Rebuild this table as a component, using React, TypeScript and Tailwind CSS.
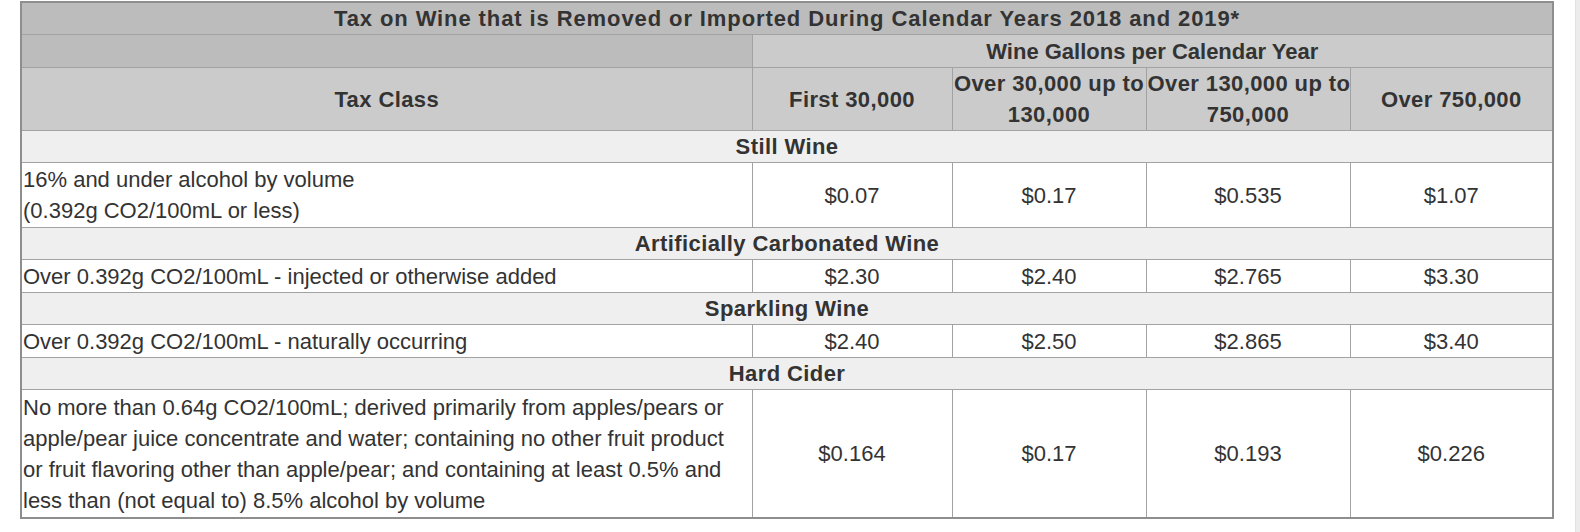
import { Fragment } from 'react';

const font = { fontFamily: '"Liberation Sans", Arial, sans-serif' };

const rates = [
  {
    group: 'Still Wine',
    pad: 'py-px',
    label: (
      <>
        16% and under alcohol by volume
        <br />
        (0.392g CO2/100mL or less)
      </>
    ),
    values: ['$0.07', '$0.17', '$0.535', '$1.07'],
  },
  {
    group: 'Artificially Carbonated Wine',
    pad: 'pt-px',
    label: <>Over 0.392g CO2/100mL - injected or otherwise added</>,
    values: ['$2.30', '$2.40', '$2.765', '$3.30'],
  },
  {
    group: 'Sparkling Wine',
    pad: 'pt-px',
    label: <>Over 0.392g CO2/100mL - naturally occurring</>,
    values: ['$2.40', '$2.50', '$2.865', '$3.40'],
  },
  {
    group: 'Hard Cider',
    pad: 'pt-[2px] pb-px',
    label: (
      <>
        No more than 0.64g CO2/100mL; derived primarily from apples/pears or
        <br />
        apple/pear juice concentrate and water; containing no other fruit product
        <br />
        or fruit flavoring other than apple/pear; and containing at least 0.5% and
        <br />
        less than (not equal to) 8.5% alcohol by volume
      </>
    ),
    values: ['$0.164', '$0.17', '$0.193', '$0.226'],
  },
];

const th = 'border border-[#a2a2a2] px-px py-0 text-center font-bold tracking-[0.4px] text-[#333]';
const td = 'border border-[#a2a2a2] bg-white px-px text-[#333]';

export default function App() {
  return (
    <div className="flex h-[532px] w-[1580px] overflow-hidden bg-white" style={font}>
      <div className="flex-1 pl-[20px] pt-[1px]">
        <table className="w-[1532px] table-fixed border-collapse border-2 border-[#8e8e8e] text-[22px] leading-[31px]">
          <colgroup>
            <col className="w-[731px]" />
            <col className="w-[200px]" />
            <col className="w-[194px]" />
            <col className="w-[204px]" />
            <col className="w-[203px]" />
          </colgroup>
          <thead>
            <tr className="bg-[#bcbcbc]">
              <th colSpan={5} className={`${th} tracking-[0.9px]`}>
                Tax on Wine that is Removed or Imported During Calendar Years 2018 and 2019*
              </th>
            </tr>
            <tr>
              <th className={`${th} bg-[#bcbcbc] pt-px`}></th>
              <th colSpan={4} className={`${th} bg-[#cbcbcb] pt-px tracking-normal`}>
                Wine Gallons per Calendar Year
              </th>
            </tr>
            <tr className="bg-[#cbcbcb]">
              <th className={`${th} pt-[2px] pb-px`}>Tax Class</th>
              <th className={th}>First 30,000</th>
              <th className={`${th} whitespace-nowrap tracking-[0.2px]`}>
                Over 30,000 up to
                <br />
                130,000
              </th>
              <th className={`${th} whitespace-nowrap tracking-[0.2px]`}>
                Over 130,000 up to
                <br />
                750,000
              </th>
              <th className={th}>Over 750,000</th>
            </tr>
          </thead>
          <tbody>
            {rates.map((r) => (
              <Fragment key={r.group}>
                <tr className="bg-[#efefef]">
                  <td colSpan={5} className={`${th} bg-[#efefef]`}>
                    {r.group}
                  </td>
                </tr>
                <tr>
                  <td className={`${td} ${r.pad} whitespace-nowrap text-left`}>{r.label}</td>
                  {r.values.map((v) => (
                    <td key={v} className={`${td} text-center`}>
                      {v}
                    </td>
                  ))}
                </tr>
              </Fragment>
            ))}
          </tbody>
        </table>
        <p className="pl-[2px] pt-[8px] text-[22px] leading-[31px] text-[#333]">
          * Additional rules may apply. See the text of the tax law and the regulations for full details.
        </p>
      </div>
      <div className="w-[5px] border-l border-[#e2e2e2] bg-[#ececec]"></div>
    </div>
  );
}
